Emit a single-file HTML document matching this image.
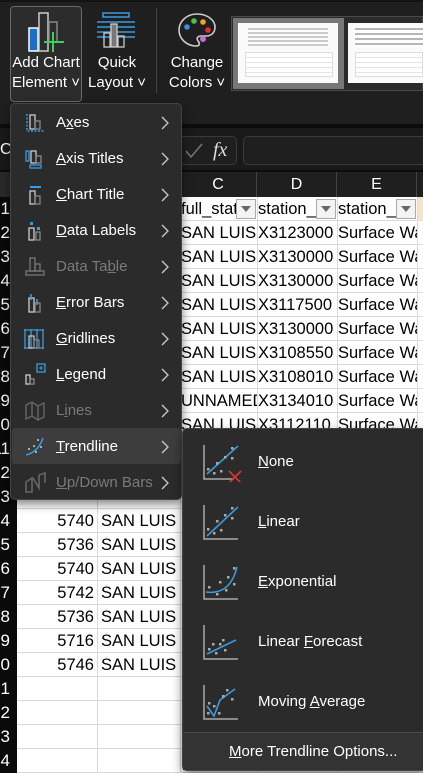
<!DOCTYPE html>
<html><head><meta charset="utf-8"><style>
*{margin:0;padding:0;box-sizing:border-box}
body{width:423px;height:773px;overflow:hidden;background:#0c0c0c;font-family:"Liberation Sans","DejaVu Sans",sans-serif;position:relative}
.abs{position:absolute}
.rib{left:0;top:0;width:423px;height:124px;background:#1f1f1f;border-top:2px solid #141414}
.btn{color:#fff;font-size:15px;text-align:center;line-height:20px}
.grid{left:17px;top:197px;width:406px;height:576px;background:#fff}
.cell{position:absolute;font-size:16.5px;color:#000;white-space:nowrap;overflow:hidden;line-height:24px;height:24px}
.rh{position:absolute;left:0;width:17px;height:24px;color:#fff;font-size:17px;line-height:24px;text-align:right;padding-right:7px;overflow:hidden;white-space:nowrap;background:#0a0a0a;direction:rtl}
.menu{left:10px;top:103px;width:172px;height:397px;background:#2b2b2b;border:1px solid #444;border-radius:5px;box-shadow:0 4px 10px rgba(0,0,0,.5)}
.mi{position:absolute;left:0;width:170px;height:36px;color:#fff;font-size:15px;line-height:36px}
.mi span{position:absolute;left:45px}
.mi .ar{position:absolute;left:150px;top:11px;width:8px;height:14px}
.dis{color:#7a7a7a}
.sub{left:182px;top:428px;width:245px;height:343px;background:#2b2b2b;border:1px solid #444;border-radius:5px;box-shadow:0 4px 10px rgba(0,0,0,.5)}
.si{position:absolute;left:0;width:245px;height:60px;color:#fff;font-size:15px;line-height:60px}
.si span{position:absolute;left:75px}
u{text-decoration:underline}
</style></head><body>
<div class="abs rib"></div>
<div class="abs" style="left:10px;top:6px;width:72px;height:96px;border:1px solid #6a6a6a;border-radius:4px;background:#2c2c2c"></div>
<svg class="abs" style="left:25px;top:10px" width="45" height="45" viewBox="0 0 45 45">
<rect x="4" y="18" width="9" height="23" fill="#1e6fc4" stroke="#fff" stroke-width="1.5"/>
<rect x="14" y="3" width="9" height="38" fill="none" stroke="#ccc" stroke-width="1.5"/>
<rect x="24" y="12" width="8" height="20" fill="none" stroke="#888" stroke-width="1.5"/>
<path d="M28 22v20M19 32h20" stroke="#3fcf5a" stroke-width="2"/>
</svg>
<div class="abs btn" style="left:10px;top:53px;width:72px">Add Chart<br>Element ˅</div>
<svg class="abs" style="left:96px;top:12px" width="40" height="36" viewBox="0 0 40 36">
<rect x="7" y="1" width="26" height="4" fill="none" stroke="#3a9be0" stroke-width="1.5"/>
<path d="M1 10h38M1 15h38M1 20h38M1 25h38" stroke="#3a9be0" stroke-width="1.5"/>
<rect x="8" y="21" width="6" height="14" fill="none" stroke="#ccc" stroke-width="1.3"/>
<rect x="15" y="12" width="6" height="23" fill="#777" stroke="#ccc" stroke-width="1.3"/>
<rect x="22" y="24" width="6" height="11" fill="none" stroke="#ccc" stroke-width="1.3"/>
</svg>
<div class="abs btn" style="left:84px;top:53px;width:66px">Quick<br>Layout ˅</div>
<div class="abs" style="left:156px;top:8px;width:1px;height:85px;background:#444"></div>
<svg class="abs" style="left:178px;top:12px" width="38" height="36" viewBox="0 0 38 36">
<path d="M19 2C8 2 1 10 1 18c0 9 8 16 17 16 4 0 4-3 2-5-2-3 0-5 3-5h5c6 0 9-4 9-9C37 8 29 2 19 2z" fill="none" stroke="#ccc" stroke-width="1.6"/>
<circle cx="9" cy="15" r="2.8" fill="#3a8ee0"/><circle cx="16" cy="9" r="2.8" fill="#4cc34c"/>
<circle cx="25" cy="10" r="2.8" fill="#f0a030"/><circle cx="30" cy="18" r="2.8" fill="#e03030"/>
</svg>
<div class="abs" style="left:200px;top:36px;width:6px;height:6px;border-radius:3px;background:#c070d0"></div>
<div class="abs btn" style="left:164px;top:53px;width:66px">Change<br>Colors ˅</div>
<div class="abs" style="left:231px;top:16px;width:192px;height:75px;background:#2a2a2a;border:1px solid #4a4a4a"></div>
<div class="abs" style="left:233px;top:18px;width:111px;height:71px;background:#777"></div>
<div class="abs" style="left:238px;top:23px;width:100px;height:60px;background:#fafafa"></div>
<div class="abs" style="left:248px;top:26px;width:80px;height:20px;background:repeating-linear-gradient(#fff 0 2px,#999 2px 4px);opacity:.5"></div>
<div class="abs" style="left:245px;top:52px;width:88px;height:25px;border:1px solid #ddd;background:repeating-linear-gradient(#fff 0 4px,#e4e4e4 4px 5px)"></div>
<div class="abs" style="left:348px;top:23px;width:75px;height:60px;background:#fafafa"></div>
<div class="abs" style="left:355px;top:25px;width:68px;height:22px;background:repeating-linear-gradient(#fff 0 3px,#888 3px 5px);opacity:.6"></div>
<div class="abs" style="left:355px;top:52px;width:68px;height:25px;border:1px solid #ddd;background:repeating-linear-gradient(#fff 0 4px,#e4e4e4 4px 5px)"></div>

<div class="abs" style="left:0;top:128px;width:423px;height:42px;background:#1a1a1a"></div>
<div class="abs" style="left:0;top:136px;color:#fff;font-size:16px;line-height:28px">C</div>
<div class="abs" style="left:182px;top:136px;width:55px;height:29px;border:1px solid #3a3a3a;border-left:none;border-radius:0 5px 5px 0;background:#1f1f1f"></div>
<svg class="abs" style="left:184px;top:142px" width="20" height="18"><path d="M2 9l5 6L18 2" stroke="#777" stroke-width="1.5" fill="none"/></svg>
<div class="abs" style="left:213px;top:135px;color:#ddd;font:italic 20px 'Liberation Serif',serif;line-height:30px">fx</div>
<div class="abs" style="left:243px;top:136px;width:190px;height:29px;border:1px solid #3a3a3a;border-radius:5px;background:#1f1f1f"></div>
<div class="abs" style="left:0;top:172px;width:423px;height:25px;background:#1f1f1f"></div>
<div class="abs" style="left:0;top:172px;width:17px;height:25px;background:#2a2a2a"></div>
<div class="abs" style="left:180px;top:172px;width:77px;height:25px;color:#fff;font-size:16px;text-align:center;line-height:25px;border-right:1px solid #444">C</div>
<div class="abs" style="left:257px;top:172px;width:80px;height:25px;color:#fff;font-size:16px;text-align:center;line-height:25px;border-right:1px solid #444">D</div>
<div class="abs" style="left:337px;top:172px;width:80px;height:25px;color:#fff;font-size:16px;text-align:center;line-height:25px;border-right:1px solid #444">E</div>
<div class="abs grid" style="background:#fff repeating-linear-gradient(#fff 0 23px,#d9d9d9 23px 24px)"></div>
<div class="abs" style="left:97px;top:197px;width:1px;height:576px;background:#d9d9d9"></div>
<div class="abs" style="left:180px;top:197px;width:1px;height:576px;background:#d9d9d9"></div>
<div class="abs" style="left:257px;top:197px;width:1px;height:576px;background:#d9d9d9"></div>
<div class="abs" style="left:337px;top:197px;width:1px;height:576px;background:#d9d9d9"></div>
<div class="abs" style="left:417px;top:197px;width:1px;height:576px;background:#d9d9d9"></div>
<div class="abs" style="left:418px;top:197px;width:5px;height:24px;background:#f7e1c8"></div>

<div class="rh" style="top:197px">1</div><div class="rh" style="top:221px">2</div><div class="rh" style="top:245px">3</div><div class="rh" style="top:269px">4</div><div class="rh" style="top:293px">5</div><div class="rh" style="top:317px">6</div><div class="rh" style="top:341px">7</div><div class="rh" style="top:365px">8</div><div class="rh" style="top:389px">9</div><div class="rh" style="top:413px">10</div><div class="rh" style="top:437px">11</div><div class="rh" style="top:461px">12</div><div class="rh" style="top:485px">13</div><div class="rh" style="top:509px">14</div><div class="rh" style="top:533px">15</div><div class="rh" style="top:557px">16</div><div class="rh" style="top:581px">17</div><div class="rh" style="top:605px">18</div><div class="rh" style="top:629px">19</div><div class="rh" style="top:653px">20</div><div class="rh" style="top:677px">21</div><div class="rh" style="top:701px">22</div><div class="rh" style="top:725px">23</div><div class="rh" style="top:749px">24</div>

<div class="cell" style="left:181px;top:197px;width:55px">full_station_name</div>
<div class="cell" style="left:258px;top:197px;width:58px">station_id</div>
<div class="cell" style="left:338px;top:197px;width:58px">station_type</div>
<div class="abs" style="left:236px;top:199px;width:20px;height:20px;border:1px solid #aaa;background:#f3f3f3"></div>
<div class="abs" style="left:316px;top:199px;width:20px;height:20px;border:1px solid #aaa;background:#f3f3f3"></div>
<div class="abs" style="left:396px;top:199px;width:20px;height:20px;border:1px solid #aaa;background:#f3f3f3"></div>
<svg class="abs" style="left:241px;top:206px" width="10" height="6"><path d="M0 0h10L5 6z" fill="#666"/></svg>
<svg class="abs" style="left:321px;top:206px" width="10" height="6"><path d="M0 0h10L5 6z" fill="#666"/></svg>
<svg class="abs" style="left:401px;top:206px" width="10" height="6"><path d="M0 0h10L5 6z" fill="#666"/></svg>

<div class="cell" style="left:181px;top:221px;width:76px">SAN LUIS RES</div><div class="cell" style="left:258px;top:221px;width:79px">X3123000</div><div class="cell" style="left:338px;top:221px;width:79px">Surface Water</div>
<div class="cell" style="left:181px;top:245px;width:76px">SAN LUIS RES</div><div class="cell" style="left:258px;top:245px;width:79px">X3130000</div><div class="cell" style="left:338px;top:245px;width:79px">Surface Water</div>
<div class="cell" style="left:181px;top:269px;width:76px">SAN LUIS RES</div><div class="cell" style="left:258px;top:269px;width:79px">X3130000</div><div class="cell" style="left:338px;top:269px;width:79px">Surface Water</div>
<div class="cell" style="left:181px;top:293px;width:76px">SAN LUIS RES</div><div class="cell" style="left:258px;top:293px;width:79px">X3117500</div><div class="cell" style="left:338px;top:293px;width:79px">Surface Water</div>
<div class="cell" style="left:181px;top:317px;width:76px">SAN LUIS RES</div><div class="cell" style="left:258px;top:317px;width:79px">X3130000</div><div class="cell" style="left:338px;top:317px;width:79px">Surface Water</div>
<div class="cell" style="left:181px;top:341px;width:76px">SAN LUIS RES</div><div class="cell" style="left:258px;top:341px;width:79px">X3108550</div><div class="cell" style="left:338px;top:341px;width:79px">Surface Water</div>
<div class="cell" style="left:181px;top:365px;width:76px">SAN LUIS RES</div><div class="cell" style="left:258px;top:365px;width:79px">X3108010</div><div class="cell" style="left:338px;top:365px;width:79px">Surface Water</div>
<div class="cell" style="left:181px;top:389px;width:76px">UNNAMED</div><div class="cell" style="left:258px;top:389px;width:79px">X3134010</div><div class="cell" style="left:338px;top:389px;width:79px">Surface Water</div>
<div class="cell" style="left:181px;top:413px;width:76px">SAN LUIS RES</div><div class="cell" style="left:258px;top:413px;width:79px">X3112110</div><div class="cell" style="left:338px;top:413px;width:79px">Surface Water</div>

<div class="cell" style="left:18px;top:509px;width:78px;text-align:right;padding-right:2px">5740</div><div class="cell" style="left:101px;top:509px;width:79px">SAN LUIS F</div>
<div class="cell" style="left:18px;top:533px;width:78px;text-align:right;padding-right:2px">5736</div><div class="cell" style="left:101px;top:533px;width:79px">SAN LUIS F</div>
<div class="cell" style="left:18px;top:557px;width:78px;text-align:right;padding-right:2px">5740</div><div class="cell" style="left:101px;top:557px;width:79px">SAN LUIS F</div>
<div class="cell" style="left:18px;top:581px;width:78px;text-align:right;padding-right:2px">5742</div><div class="cell" style="left:101px;top:581px;width:79px">SAN LUIS F</div>
<div class="cell" style="left:18px;top:605px;width:78px;text-align:right;padding-right:2px">5736</div><div class="cell" style="left:101px;top:605px;width:79px">SAN LUIS F</div>
<div class="cell" style="left:18px;top:629px;width:78px;text-align:right;padding-right:2px">5716</div><div class="cell" style="left:101px;top:629px;width:79px">SAN LUIS F</div>
<div class="cell" style="left:18px;top:653px;width:78px;text-align:right;padding-right:2px">5746</div><div class="cell" style="left:101px;top:653px;width:79px">SAN LUIS F</div>

<div class="abs menu">
<div class="abs" style="left:1px;top:324px;width:169px;height:36px;background:#3d3d3d;border-radius:3px"></div>
<div class="mi" style="top:1px"><svg class="abs" style="left:14px;top:8px" width="20" height="20"><path d="M2 1v17h17" stroke="#3a9be0" stroke-width="1.5" fill="none" stroke-dasharray="2 1.5"/><rect x="5" y="2" width="5" height="14" fill="none" stroke="#ccc" stroke-width="1.3"/><rect x="10" y="8" width="5" height="8" fill="none" stroke="#888" stroke-width="1.3"/></svg><span>A<u>x</u>es</span><svg class="ar"><path d="M1 1l6 6-6 6" stroke="#ccc" fill="none" stroke-width="1.3"/></svg></div>
<div class="mi" style="top:37px"><svg class="abs" style="left:14px;top:8px" width="20" height="20"><rect x="1" y="2" width="3" height="10" fill="none" stroke="#3a9be0" stroke-width="1.3"/><rect x="6" y="2" width="5" height="12" fill="none" stroke="#ccc" stroke-width="1.3"/><rect x="11" y="7" width="5" height="7" fill="none" stroke="#888" stroke-width="1.3"/><rect x="5" y="16" width="11" height="3" fill="none" stroke="#3a9be0" stroke-width="1.3"/></svg><span><u>A</u>xis Titles</span><svg class="ar"><path d="M1 1l6 6-6 6" stroke="#ccc" fill="none" stroke-width="1.3"/></svg></div>
<div class="mi" style="top:73px"><svg class="abs" style="left:14px;top:8px" width="20" height="20"><rect x="5" y="1" width="11" height="2" fill="#3a9be0"/><rect x="5" y="6" width="5" height="13" fill="none" stroke="#ccc" stroke-width="1.3"/><rect x="10" y="11" width="5" height="8" fill="none" stroke="#888" stroke-width="1.3"/></svg><span><u>C</u>hart Title</span><svg class="ar"><path d="M1 1l6 6-6 6" stroke="#ccc" fill="none" stroke-width="1.3"/></svg></div>
<div class="mi" style="top:109px"><svg class="abs" style="left:14px;top:8px" width="20" height="20"><rect x="5" y="1" width="3" height="3" fill="#3a9be0"/><rect x="12" y="6" width="3" height="3" fill="#3a9be0"/><rect x="4" y="7" width="5" height="12" fill="none" stroke="#ccc" stroke-width="1.3"/><rect x="11" y="11" width="4" height="8" fill="none" stroke="#888" stroke-width="1.3"/></svg><span><u>D</u>ata Labels</span><svg class="ar"><path d="M1 1l6 6-6 6" stroke="#ccc" fill="none" stroke-width="1.3"/></svg></div>
<div class="mi dis" style="top:145px"><svg class="abs" style="left:14px;top:8px" width="20" height="20"><rect x="5" y="1" width="5" height="13" fill="none" stroke="#777" stroke-width="1.3"/><rect x="10" y="7" width="5" height="7" fill="none" stroke="#777" stroke-width="1.3"/><rect x="1" y="14" width="18" height="4" fill="none" stroke="#777" stroke-width="1.3"/></svg><span>Data Ta<u>b</u>le</span><svg class="ar"><path d="M1 1l6 6-6 6" stroke="#ccc" fill="none" stroke-width="1.3"/></svg></div>
<div class="mi" style="top:181px"><svg class="abs" style="left:14px;top:8px" width="20" height="20"><rect x="4" y="5" width="5" height="14" fill="none" stroke="#ccc" stroke-width="1.3"/><rect x="10" y="10" width="5" height="9" fill="none" stroke="#888" stroke-width="1.3"/><path d="M6 1v6M12 6v6" stroke="#3a9be0" stroke-width="1.6"/></svg><span><u>E</u>rror Bars</span><svg class="ar"><path d="M1 1l6 6-6 6" stroke="#ccc" fill="none" stroke-width="1.3"/></svg></div>
<div class="mi" style="top:217px"><svg class="abs" style="left:12px;top:7px" width="22" height="22"><path d="M1 2h20M1 20h20M2 1v20M20 1v20M8 1v20M14 1v20" stroke="#3a9be0" stroke-width="1.3"/><rect x="6" y="8" width="5" height="12" fill="none" stroke="#ccc" stroke-width="1.2"/><rect x="11" y="12" width="5" height="8" fill="none" stroke="#888" stroke-width="1.2"/></svg><span><u>G</u>ridlines</span><svg class="ar"><path d="M1 1l6 6-6 6" stroke="#ccc" fill="none" stroke-width="1.3"/></svg></div>
<div class="mi" style="top:253px"><svg class="abs" style="left:14px;top:6px" width="22" height="22"><rect x="1" y="12" width="4" height="9" fill="none" stroke="#ccc" stroke-width="1.3"/><rect x="5" y="16" width="4" height="5" fill="none" stroke="#888" stroke-width="1.3"/><rect x="12" y="1" width="8" height="8" fill="none" stroke="#3a9be0" stroke-width="1.3"/><path d="M16 3v4M14 5h4" stroke="#3a9be0"/></svg><span><u>L</u>egend</span><svg class="ar"><path d="M1 1l6 6-6 6" stroke="#ccc" fill="none" stroke-width="1.3"/></svg></div>
<div class="mi dis" style="top:289px"><svg class="abs" style="left:14px;top:8px" width="20" height="20"><path d="M1 4l6-3 6 4 6-3v14l-6 3-6-4-6 3z M7 1v15M13 5v15" stroke="#666" fill="none" stroke-width="1.4"/></svg><span>L<u>i</u>nes</span><svg class="ar"><path d="M1 1l6 6-6 6" stroke="#ccc" fill="none" stroke-width="1.3"/></svg></div>
<div class="mi" style="top:325px"><svg class="abs" style="left:14px;top:8px" width="22" height="20"><path d="M1 18c8-2 14-8 17-17" stroke="#3a9be0" stroke-width="1.5" fill="none"/><g fill="#aaa"><rect x="3" y="11" width="2" height="2"/><rect x="8" y="8" width="2" height="2"/><rect x="12" y="2" width="2" height="2"/><rect x="15" y="9" width="2" height="2"/><rect x="10" y="14" width="2" height="2"/></g></svg><span><u>T</u>rendline</span><svg class="ar"><path d="M1 1l6 6-6 6" stroke="#ccc" fill="none" stroke-width="1.3"/></svg></div>
<div class="mi dis" style="top:361px"><svg class="abs" style="left:14px;top:7px" width="22" height="22"><path d="M1 10v10h6V6z M8 6l6 10V3M14 3l6-2v10" stroke="#666" fill="none" stroke-width="1.6"/></svg><span><u>U</u>p/Down Bars</span><svg class="ar"><path d="M1 1l6 6-6 6" stroke="#ccc" fill="none" stroke-width="1.3"/></svg></div>
</div>

<div class="abs sub">
<div class="si" style="top:3px"><svg class="abs" style="left:20px;top:12px" width="40" height="38"><path d="M1 1v34h30" stroke="#aaa" stroke-width="1.5" fill="none"/><path d="M4 30L35 2" stroke="#3a9be0" stroke-width="1.6"/><g fill="#aaa"><rect x="4" y="24" width="2.5" height="2.5"/><rect x="10" y="28" width="2.5" height="2.5"/><rect x="13" y="18" width="2.5" height="2.5"/><rect x="17" y="26" width="2.5" height="2.5"/><rect x="21" y="12" width="2.5" height="2.5"/><rect x="28" y="3" width="2.5" height="2.5"/><rect x="28" y="13" width="2.5" height="2.5"/></g><path d="M26 27l12 12M38 27L26 39" stroke="#e03535" stroke-width="1.6"/></svg><span><u>N</u>one</span></div>
<div class="si" style="top:63px"><svg class="abs" style="left:20px;top:12px" width="40" height="38"><path d="M1 1v34h34" stroke="#aaa" stroke-width="1.5" fill="none"/><path d="M4 32L35 3" stroke="#3a9be0" stroke-width="1.6"/><g fill="#aaa"><rect x="4" y="24" width="2.5" height="2.5"/><rect x="10" y="28" width="2.5" height="2.5"/><rect x="13" y="16" width="2.5" height="2.5"/><rect x="17" y="25" width="2.5" height="2.5"/><rect x="21" y="10" width="2.5" height="2.5"/><rect x="28" y="3" width="2.5" height="2.5"/><rect x="28" y="13" width="2.5" height="2.5"/></g></svg><span><u>L</u>inear</span></div>
<div class="si" style="top:123px"><svg class="abs" style="left:20px;top:12px" width="40" height="38"><path d="M1 1v34h34" stroke="#aaa" stroke-width="1.5" fill="none"/><path d="M3 28c14 2 26-4 31-25" stroke="#3a9be0" stroke-width="1.6" fill="none"/><g fill="#aaa"><rect x="5" y="22" width="2.5" height="2.5"/><rect x="13" y="29" width="2.5" height="2.5"/><rect x="16" y="17" width="2.5" height="2.5"/><rect x="22" y="25" width="2.5" height="2.5"/><rect x="24" y="12" width="2.5" height="2.5"/><rect x="30" y="3" width="2.5" height="2.5"/><rect x="30" y="19" width="2.5" height="2.5"/></g></svg><span><u>E</u>xponential</span></div>
<div class="si" style="top:183px"><svg class="abs" style="left:20px;top:12px" width="40" height="38"><path d="M1 1v34h34" stroke="#aaa" stroke-width="1.5" fill="none"/><path d="M4 30L33 16" stroke="#3a9be0" stroke-width="1.6"/><g fill="#aaa"><rect x="5" y="24" width="2.5" height="2.5"/><rect x="9" y="19" width="2.5" height="2.5"/><rect x="12" y="28" width="2.5" height="2.5"/><rect x="16" y="19" width="2.5" height="2.5"/><rect x="19" y="15" width="2.5" height="2.5"/><rect x="21" y="25" width="2.5" height="2.5"/></g></svg><span>Linear <u>F</u>orecast</span></div>
<div class="si" style="top:243px"><svg class="abs" style="left:20px;top:12px" width="40" height="38"><path d="M1 1v34h34" stroke="#aaa" stroke-width="1.5" fill="none"/><path d="M4 22l7 10 6-16 15-11" stroke="#3a9be0" stroke-width="1.6" fill="none"/><g fill="#aaa"><rect x="4" y="28" width="2.5" height="2.5"/><rect x="5" y="18" width="2.5" height="2.5"/><rect x="10" y="21" width="2.5" height="2.5"/><rect x="15" y="28" width="2.5" height="2.5"/><rect x="19" y="11" width="2.5" height="2.5"/><rect x="23" y="5" width="2.5" height="2.5"/><rect x="28" y="14" width="2.5" height="2.5"/></g></svg><span>Moving <u>A</u>verage</span></div>
<div class="abs" style="left:0;top:303px;width:245px;height:1px;background:#4a4a4a"></div>
<div class="abs" style="left:0;top:304px;width:245px;height:37px;background:#333"></div>
<div class="abs" style="left:46px;top:304px;color:#fff;font-size:15px;line-height:37px"><u>M</u>ore Trendline Options...</div>
</div>
</body></html>
